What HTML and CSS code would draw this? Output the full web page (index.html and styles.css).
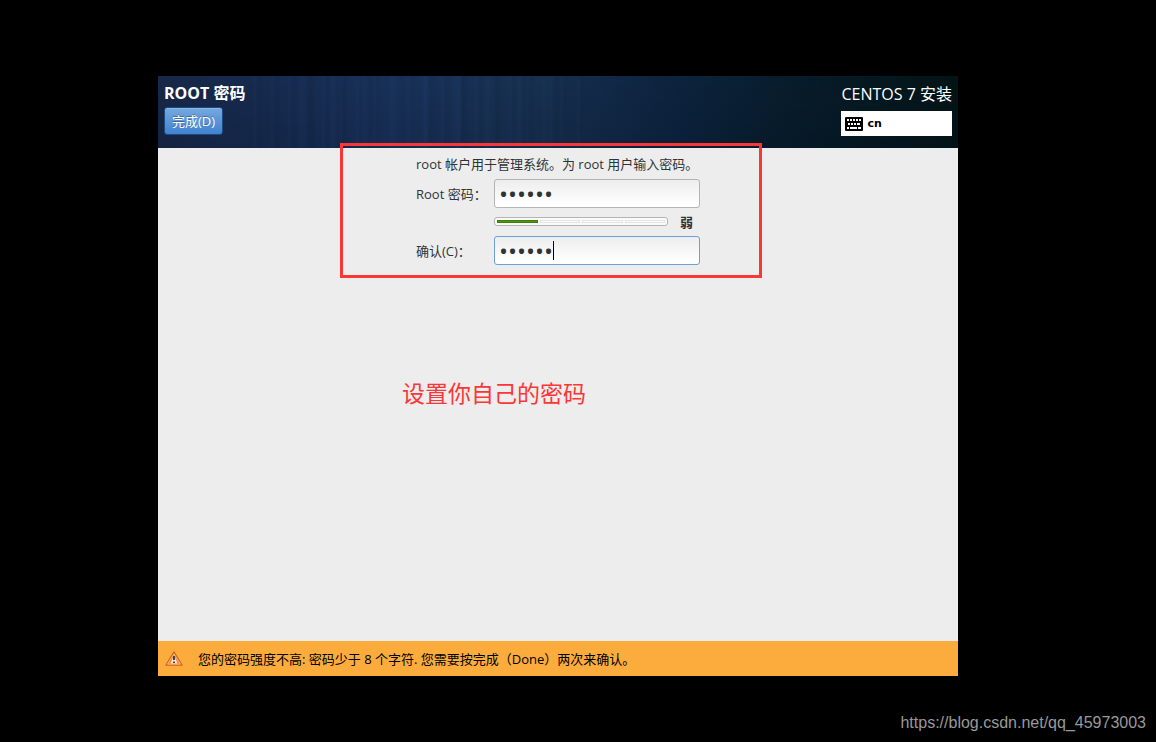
FILE: index.html
```html
<!DOCTYPE html>
<html lang="zh-CN">
<head>
  <meta charset="UTF-8">
  <title>ROOT 密码</title>
  <link rel="stylesheet" href="styles.css">
</head>
<body>

  <div class="installer">
    <header class="header">
      <div class="header-left">
        <h1>ROOT 密码</h1>
        <button type="submit" form="passwordForm" class="done">完成(D)</button>
      </div>
      <div class="header-right">
        <div class="product">CENTOS 7 安装</div>
        <div class="keyboard">
          <svg width="18" height="14" viewBox="0 0 18 14">
            <rect width="18" height="14" rx="1" fill="#000"/>
            <path d="M2 3h2M5 3h2M8 3h2M11 3h2M14 3h2M3 7h2M6 7h2M9 7h2M12 7h3M2 11h2M5 11h7M13 11h3" stroke="#fff" stroke-width="2"/>
          </svg>
          <span>cn</span>
        </div>
      </div>
    </header>

    <main class="content">
      <form id="passwordForm" class="password-form">
        <p class="intro">root 帐户用于管理系统。为 root 用户输入密码。</p>

        <label for="password">Root 密码：</label>
        <input type="password" id="password" value="123456">

        <div class="strength">
          <div class="bar"><i class="filled"></i><i></i><i></i><i></i></div>
          <strong>弱</strong>
        </div>

        <label for="confirm">确认(C)：</label>
        <div class="confirm-field">
          <input type="password" id="confirm" class="active" value="123456">
          <span class="caret"></span>
        </div>

        <div class="highlight"></div>
      </form>

      <p class="note">设置你自己的密码</p>
    </main>

    <footer class="warning">
      <svg width="18" height="16" viewBox="0 0 18 16">
        <path d="M9 1.2L17 14H1z" fill="#e06a1c" stroke="#d5601a" stroke-width="1.4" stroke-linejoin="round"/>
        <path d="M9 2.8L15.6 13.2H2.4z" fill="#ee8a3c" stroke="#fbc48c" stroke-width="0.8" stroke-linejoin="round"/>
        <path d="M9 4L12.5 12.5H5.5z" fill="#f6e6d6"/>
        <path d="M8 5h2v4H8zM8 10.5h2V12H8z" fill="#444"/>
      </svg>
      <span>您的密码强度不高: 密码少于 8 个字符. 您需要按完成（Done）两次来确认。</span>
    </footer>
  </div>

  <div class="watermark">https://blog.csdn.net/qq_45973003</div>

</body>
</html>
```
FILE: styles.css
```css
* {
  box-sizing: border-box;
}

body {
  margin: 0;
  min-height: 100vh;
  display: flex;
  flex-direction: column;
  background: #000;
  color: #2e3436;
  font-family: "Open Sans", "Noto Sans CJK SC", sans-serif;
  font-size: 13px;
}

h1, p {
  margin: 0;
}

.installer {
  flex: 1;
  display: flex;
  flex-direction: column;
  margin: 76px 198px 0 158px;
  background: #ededed;
}

.header {
  display: flex;
  justify-content: space-between;
  height: 72px;
  padding: 6px;
  color: #fff;
  background:
    repeating-linear-gradient(90deg, transparent 0 9px, rgba(60, 110, 170, 0.04) 13px 15px, rgba(0, 0, 0, 0.04) 19px 22px, transparent 31px) 130px 0 / 280px 100% no-repeat,
    repeating-linear-gradient(90deg, transparent 0 5px, rgba(60, 110, 170, 0.04) 7px, rgba(0, 0, 0, 0.04) 11px, transparent 17px) 90px 0 / 340px 100% no-repeat,
    linear-gradient(rgba(0, 0, 0, 0), rgba(0, 0, 20, 0.12)),
    linear-gradient(90deg, #172848 0%, #162b50 15%, #183159 30%, #16304f 48%, #0d2440 63%, #071c2a 80%, #031417 100%);
}

.header h1 {
  font-size: 16px;
  line-height: 22px;
}

.done {
  display: block;
  height: 28px;
  margin-top: 3px;
  padding: 0 7px;
  border: 1px solid #1c4a85;
  border-radius: 3px;
  background: linear-gradient(#76a8df, #3f82cf);
  box-shadow: inset 0 1px #8ab5e5;
  color: #fff;
  font-family: inherit;
  font-size: 13px;
  line-height: 26px;
  text-shadow: 0 -1px rgba(0, 0, 0, 0.3);
}

.product {
  font-size: 16px;
  line-height: 24px;
}

.keyboard {
  display: flex;
  align-items: center;
  gap: 4px;
  height: 25px;
  margin-top: 5px;
  padding: 0 4px;
  background: #fff;
  color: #000;
  font-family: "DejaVu Sans", sans-serif;
  font-size: 11px;
  font-weight: bold;
  line-height: 25px;
}

.content {
  flex: 1;
}

.password-form {
  position: relative;
  display: grid;
  grid-template-columns: 78px 206px;
  justify-content: center;
  align-items: center;
  width: 284px;
  margin: 0 auto;
  padding-top: 6px;
}

.intro {
  grid-column: 1 / 3;
  line-height: 20px;
  margin-bottom: 5px;
  white-space: nowrap;
}

.password-form input {
  display: block;
  width: 100%;
  height: 29px;
  padding: 0 4px;
  border: 1px solid #b4b4b4;
  border-radius: 3px;
  outline: none;
  background: linear-gradient(#ededed, #fff 90%);
  color: #2e3436;
  font-family: inherit;
  font-size: 24px;
}

.password-form input.active {
  border-color: #6f9fd8;
}

.strength {
  grid-column: 2;
  display: flex;
  align-items: center;
  gap: 12px;
  height: 28px;
  padding-bottom: 2px;
}

.bar {
  display: flex;
  gap: 2px;
  width: 174px;
  height: 9px;
  padding: 2px;
  border: 1px solid #b4b4b4;
  border-radius: 3px;
  background: #fafafa;
}

.bar i {
  flex: 1;
  border: 1px solid #e4e4e4;
}

.bar .filled {
  background: #4e9a06;
  border-color: #3f7d10;
}

.confirm-field {
  position: relative;
}

.caret {
  position: absolute;
  left: 59px;
  top: 5px;
  width: 1px;
  height: 19px;
  background: #000;
}

/* red marker around the form */
.highlight {
  position: absolute;
  top: -5px;
  right: -62px;
  bottom: -13px;
  left: -76px;
  border: 3px solid #fb3636;
  pointer-events: none;
}

.note {
  margin-top: 111px;
  padding-left: 244px;
  color: #fb3636;
  font-size: 23px;
  line-height: 34px;
}

.warning {
  display: flex;
  align-items: center;
  gap: 15px;
  min-height: 35px;
  padding: 0 7px;
  background: #fbac3c;
  color: #000;
}

.watermark {
  height: 66px;
  padding: 36px 10px 0 0;
  color: #999;
  font-family: "Liberation Sans", Arial, sans-serif;
  font-size: 16px;
  line-height: 22px;
  text-align: right;
}
```
